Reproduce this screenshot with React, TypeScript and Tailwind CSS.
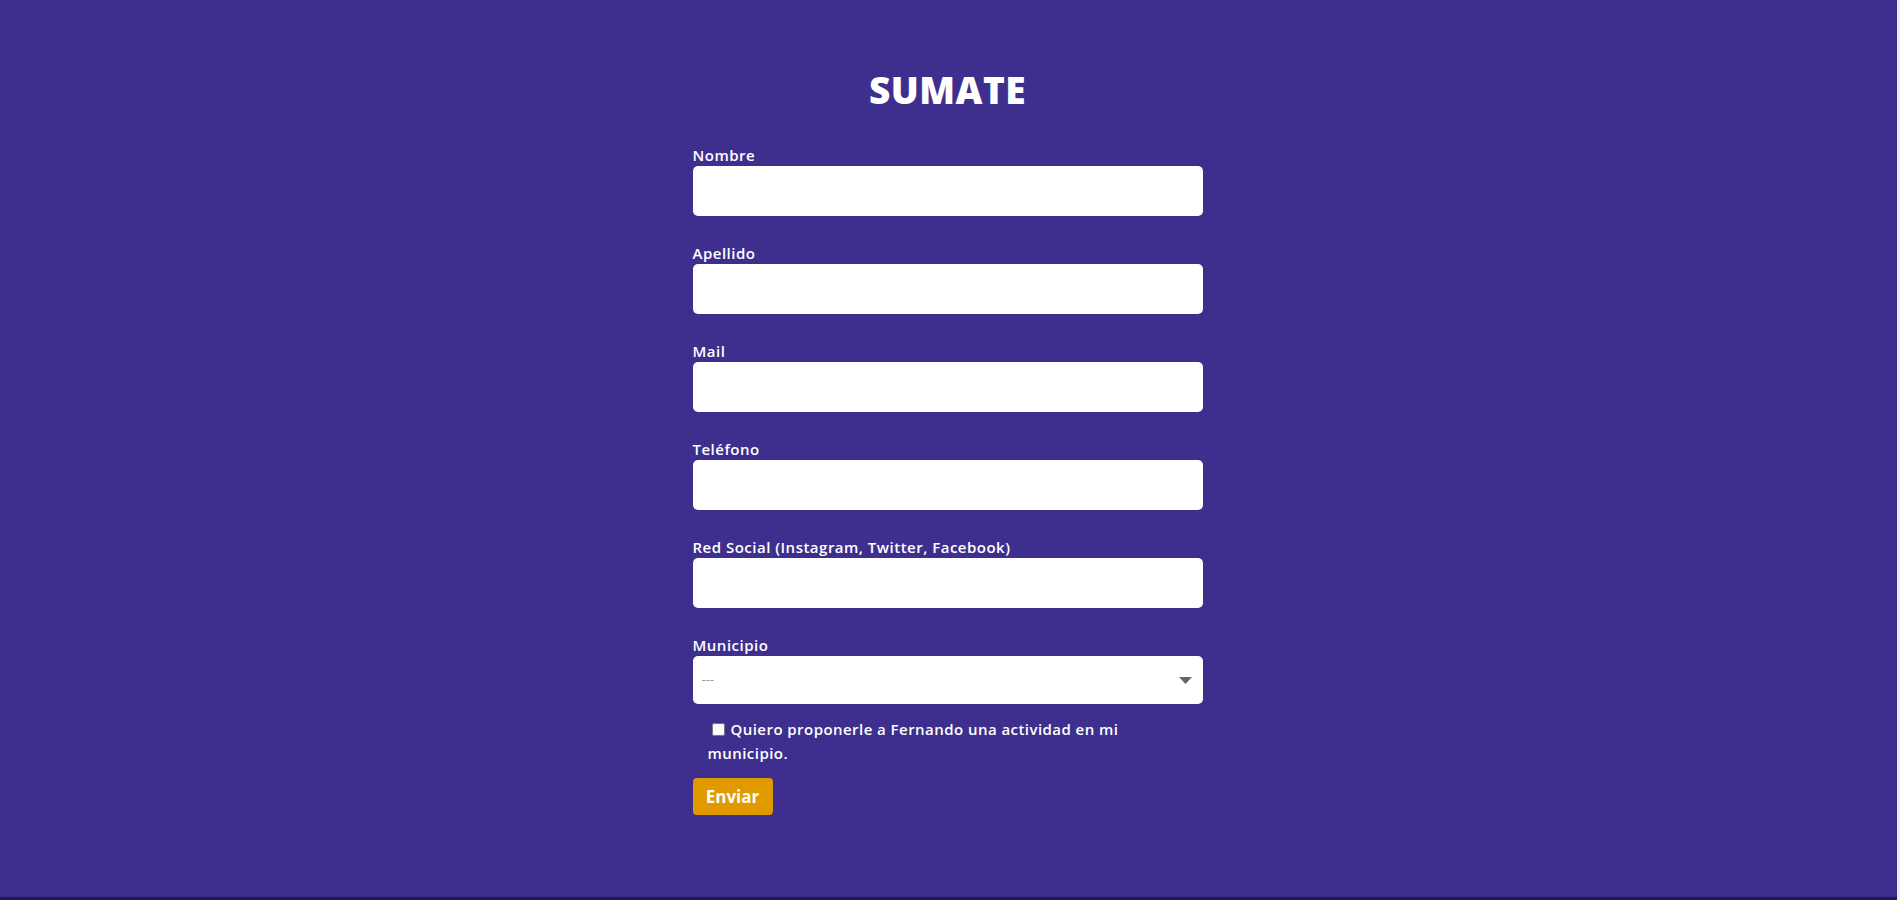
import { useState } from "react";

const fields = [
  { id: "nombre", label: "Nombre" },
  { id: "apellido", label: "Apellido" },
  { id: "mail", label: "Mail" },
  { id: "telefono", label: "Teléfono" },
  { id: "social", label: "Red Social (Instagram, Twitter, Facebook)" },
];

export default function App() {
  const [checked, setChecked] = useState(false);

  return (
    <div className="h-[900px] flex flex-col bg-[#3e2f8f] border-r-[3px] border-[#ececec] font-['Open_Sans',sans-serif]">
      <section className="h-[897px] flex flex-col items-center pt-[68px] pr-[2px]">
        <h1 className="text-[37px] leading-[44px] font-extrabold text-white tracking-[0.5px]">SUMATE</h1>

        <form className="w-[510px] mt-[34px] flex flex-col">
          {fields.map((f) => (
            <div key={f.id} className="flex flex-col mb-[28px]">
              <label htmlFor={f.id} className="text-white font-semibold text-[15px] tracking-[0.5px] leading-[18px] mb-[2px]">
                {f.label}
              </label>
              <input id={f.id} type="text" className="h-[50px] bg-white rounded-[5px] px-3 outline-none" />
            </div>
          ))}

          <div className="flex flex-col">
            <label htmlFor="municipio" className="text-white font-semibold text-[15px] tracking-[0.5px] leading-[18px] mb-[2px]">
              Municipio
            </label>
            <div className="relative">
              <select
                id="municipio"
                className="w-full h-[48px] bg-white rounded-[5px] pl-[9px] text-[13px] text-[#9a9a9a] appearance-none outline-none"
              >
                <option>---</option>
              </select>
              <svg className="absolute right-[11px] top-[21px]" width="13" height="7" viewBox="0 0 13 7">
                <path d="M0 0 L13 0 L6.5 7 Z" fill="#666" />
              </svg>
            </div>
          </div>

          <label className="mt-[13px] ml-[15px] w-[440px] text-white font-semibold text-[15px] tracking-[0.45px] leading-[24px] cursor-pointer">
            <input
              type="checkbox"
              checked={checked}
              onChange={() => setChecked(!checked)}
              className="w-[13px] h-[13px] mr-[6px] ml-[4px] align-[-1px] accent-white"
            />
            Quiero proponerle a Fernando una actividad en mi municipio.
          </label>

          <div className="mt-[13px]">
            <button
              type="button"
              className="w-[80px] h-[37px] bg-[#e09a00] rounded-[4px] text-white font-bold text-[17px]"
            >
              Enviar
            </button>
          </div>
        </form>
      </section>
      <div className="h-[3px] bg-[#221a4a]" />
    </div>
  );
}
